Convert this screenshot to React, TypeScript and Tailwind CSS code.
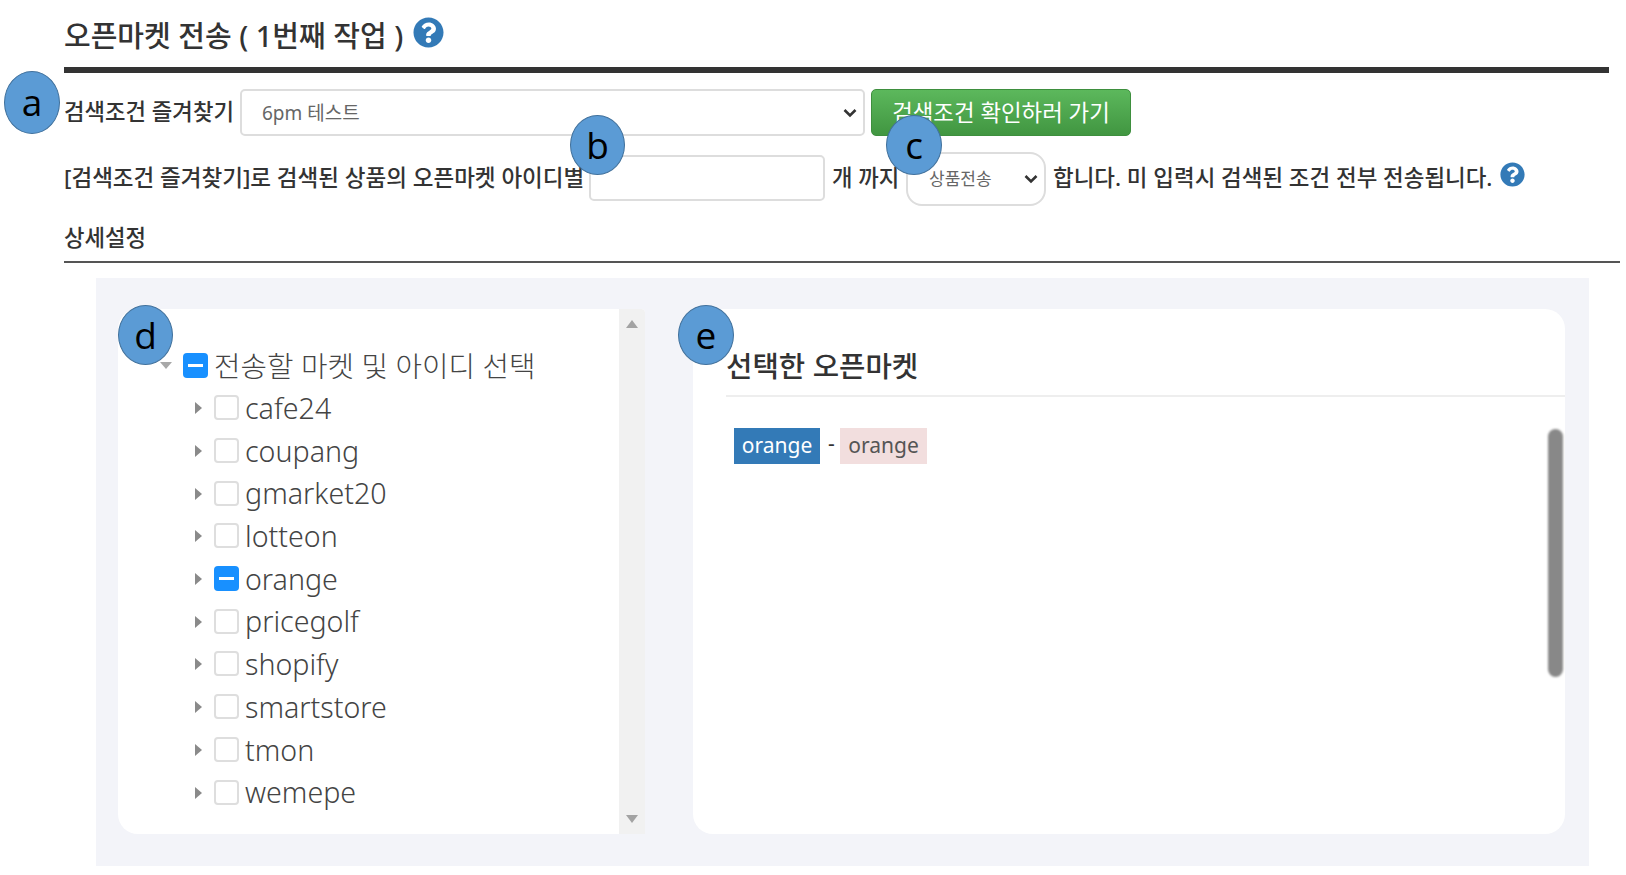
import React from 'react';
import { FaQuestionCircle } from 'react-icons/fa';

const MARKETS = ['cafe24', 'coupang', 'gmarket20', 'lotteon', 'orange', 'pricegolf', 'shopify', 'smartstore', 'tmon', 'wemepe'];

const FONT = "font-['Noto_Sans','Noto_Sans_CJK_KR',sans-serif]";

const Callout = ({ label, className }: { label: string; className: string }) => (
  <div
    className={`absolute flex items-center justify-center rounded-[50%] border border-[#41719c] bg-[#5b9bd5] text-[37px] leading-none text-black font-['Open_Sans',sans-serif] ${className}`}
  >
    <span className="-mt-[2px]">{label}</span>
  </div>
);

const Check = ({ state }: { state: 'on' | 'off' }) =>
  state === 'on' ? (
    <span className="flex h-[25px] w-[25px] shrink-0 items-center justify-center rounded-[4px] bg-[#1890ff]">
      <span className="h-[3px] w-[15px] bg-white" />
    </span>
  ) : (
    <span className="block h-[25px] w-[25px] shrink-0 rounded-[4px] border-2 border-[#dedede] bg-white" />
  );

const CaretRight = () => (
  <svg width="7" height="12" viewBox="0 0 7 12" className="shrink-0">
    <path d="M0 0L7 6L0 12Z" fill="#8a8a8a" />
  </svg>
);

const CaretDown = () => (
  <svg width="12" height="7" viewBox="0 0 12 7" className="shrink-0">
    <path d="M0 0H12L6 7Z" fill="#a8a8a8" />
  </svg>
);

const SelectChevron = () => (
  <svg
    width="14"
    height="10"
    viewBox="0 0 14 10"
    className="pointer-events-none absolute right-[8px] top-1/2 -translate-y-1/2"
  >
    <path d="M1.5 2L7 7.5L12.5 2" fill="none" stroke="#333" strokeWidth="2.6" />
  </svg>
);

export default function App() {
  return (
    <div className={`relative h-[875px] w-[1626px] overflow-hidden bg-white text-[#333] ${FONT}`}>
      <div className="pl-[64px]">
        {/* Title */}
        <div className="flex h-[67px] w-[1544px] items-start">
          <h1 className="mt-[15px] text-[29px] font-medium leading-[42px] whitespace-nowrap">오픈마켓 전송 ( 1번째 작업 )</h1>
          <FaQuestionCircle className="ml-[10px] mt-[17px] text-[#337ab7]" size={31} />
        </div>
        <div className="h-[6px] w-[1545px] bg-[#333]" />

        {/* Favorite search */}
        <div className="mt-[16px] flex h-[47px] items-center">
          <span className="-mt-[2px] w-[176px] text-[22.3px] font-medium whitespace-nowrap">검색조건 즐겨찾기</span>
          <div className="relative h-[47px] w-[625px]">
            <select className="h-full w-full appearance-none rounded-[5px] border-2 border-[#ddd] bg-white pl-[20px] pr-[6px] pt-[1px] text-[19px] text-[#666]">
              <option>6pm 테스트</option>
            </select>
            <SelectChevron />
          </div>
          <button className="ml-[6px] h-[47px] w-[260px] rounded-[5px] border border-[#3e8f3e] bg-gradient-to-b from-[#5cb85c] to-[#419641] text-[22.4px] text-white whitespace-nowrap">
            검색조건 확인하러 가기
          </button>
        </div>

        {/* Limit row */}
        <div className="mt-[16px] flex h-[54px] items-center">
          <span className="-mt-[2px] w-[525px] text-[22.5px] font-medium whitespace-nowrap">[검색조건 즐겨찾기]로 검색된 상품의 오픈마켓 아이디별</span>
          <input className="-mt-[3px] h-[46px] w-[236px] rounded-[5px] border-2 border-[#ddd] bg-white" />
          <span className="-mt-[2px] ml-[7px] w-[74px] text-[22.3px] font-medium whitespace-nowrap">개 까지</span>
          <div className="relative h-[54px] w-[140px]">
            <select className="h-full w-full appearance-none rounded-[16px] border-2 border-[#ddd] bg-white pl-[21px] pr-[6px] text-[17px] text-[#666]">
              <option>상품전송</option>
            </select>
            <SelectChevron />
          </div>
          <span className="-mt-[2px] ml-[7px] text-[22.45px] font-medium whitespace-nowrap">합니다. 미 입력시 검색된 조건 전부 전송됩니다.</span>
          <FaQuestionCircle className="ml-[8px] -mt-[10px] text-[#337ab7]" size={25} />
        </div>

        {/* Detail settings */}
        <div className="mt-[15px] flex h-[42px] w-[1556px] items-center border-b-2 border-[#555]">
          <span className="-mt-[7px] text-[22.3px] font-medium">상세설정</span>
        </div>
      </div>

      {/* Panel */}
      <div className="ml-[96px] mt-[15px] flex h-[588px] w-[1493px] gap-[48px] bg-[#f3f4f9] pb-[32px] pl-[22px] pr-[24px] pt-[31px]">
        {/* Market tree */}
        <div className="flex h-[525px] w-[527px] shrink-0 overflow-hidden rounded-l-[20px] rounded-tr-[4px] bg-white">
          <div className="flex-1 pl-[42px] pt-[35px]">
            <div className="flex h-[43px] items-center">
              <CaretDown />
              <span className="ml-[11px] -mt-[1px]"><Check state="on" /></span>
              <span className="ml-[6px] text-[28.8px] font-light text-[#444] whitespace-nowrap">전송할 마켓 및 아이디 선택</span>
            </div>
            <div className="ml-[35px]">
              {MARKETS.map((name) => (
                <div key={name} className="flex h-[42.7px] items-center">
                  <CaretRight />
                  <span className="ml-[12px] -mt-[1px]"><Check state={name === 'orange' ? 'on' : 'off'} /></span>
                  <span className="ml-[6px] text-[28.6px] font-light leading-none text-[#444]">{name}</span>
                </div>
              ))}
            </div>
          </div>
          <div className="flex w-[26px] shrink-0 flex-col items-center justify-between bg-[#f1f1f1] py-[11px]">
            <svg width="12" height="8" viewBox="0 0 12 8">
              <path d="M6 0L12 8H0Z" fill="#a3a3a3" />
            </svg>
            <svg width="12" height="8" viewBox="0 0 12 8">
              <path d="M0 0H12L6 8Z" fill="#a3a3a3" />
            </svg>
          </div>
        </div>

        {/* Selected markets */}
        <div className="relative h-[525px] w-[872px] shrink-0 rounded-[20px] bg-white pl-[33px] pt-[34px]">
          <h2 className="h-[54px] border-b-2 border-[#eee] text-[28.7px] font-medium leading-[46px] text-[#333]">선택한 오픈마켓</h2>
          <div className="ml-[8px] mt-[31px] flex items-center">
            <span className="flex h-[36px] w-[86px] items-center justify-center bg-[#337ab7] text-[21px] text-white">orange</span>
            <span className="mx-[8px] -mt-[4px] w-[4px] text-[21px]">-</span>
            <span className="flex h-[36px] w-[87px] items-center justify-center bg-[#f2dede] text-[21px] text-[#555]">orange</span>
          </div>
          <div className="absolute right-[2px] top-[120px] h-[248px] w-[15px] rounded-full bg-[#888] blur-[1px]" />
        </div>
      </div>

      <Callout label="a" className="left-[4px] top-[71px] h-[63px] w-[56px]" />
      <Callout label="b" className="left-[570px] top-[115px] h-[60px] w-[55px]" />
      <Callout label="c" className="left-[886px] top-[115px] h-[60px] w-[56px]" />
      <Callout label="d" className="left-[118px] top-[305px] h-[60px] w-[55px]" />
      <Callout label="e" className="left-[678px] top-[305px] h-[60px] w-[56px]" />
    </div>
  );
}
